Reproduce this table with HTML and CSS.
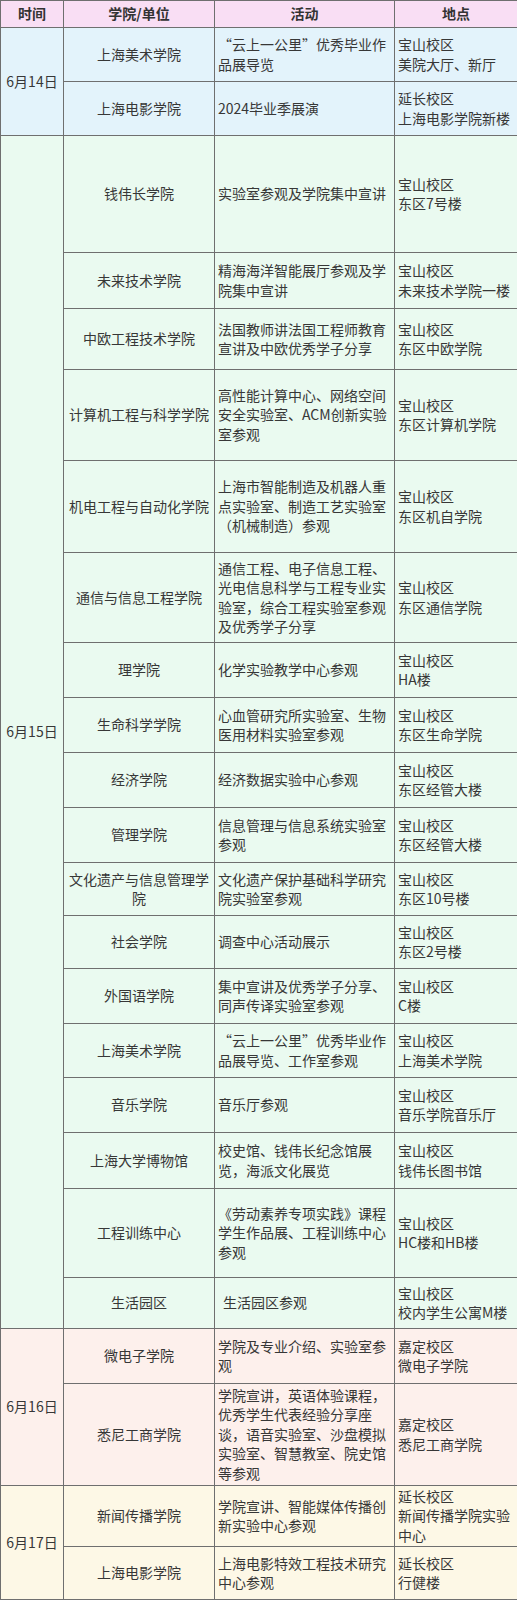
FILE: index.html
```html
<!DOCTYPE html>
<html lang="zh-CN">
<head>
<meta charset="utf-8">
<title>开放日活动安排</title>
<link rel="stylesheet" href="styles.css">
</head>
<body>
<table class="schedule">
  <colgroup>
    <col class="col-date">
    <col class="col-unit">
    <col class="col-act">
    <col class="col-loc">
  </colgroup>
  <thead>
    <tr class="head h27">
      <th>时间</th><th>学院/单位</th><th>活动</th><th>地点</th>
    </tr>
  </thead>
  <tbody class="day d14">
    <tr class="h54">
      <td class="c-date" rowspan="2">6月14日</td>
      <td class="c-unit">上海美术学院</td>
      <td class="c-act">“云上一公里”优秀毕业作品展导览</td>
      <td class="c-loc">宝山校区<br>美院大厅、新厅</td>
    </tr>
    <tr class="h54">
      <td class="c-unit">上海电影学院</td>
      <td class="c-act">2024毕业季展演</td>
      <td class="c-loc">延长校区<br>上海电影学院新楼</td>
    </tr>
  </tbody>
  <tbody class="day d15">
    <tr class="h117">
      <td class="c-date" rowspan="18">6月15日</td>
      <td class="c-unit">钱伟长学院</td>
      <td class="c-act">实验室参观及学院集中宣讲</td>
      <td class="c-loc">宝山校区<br>东区7号楼</td>
    </tr>
    <tr class="h56">
      <td class="c-unit">未来技术学院</td>
      <td class="c-act">精海海洋智能展厅参观及学院集中宣讲</td>
      <td class="c-loc">宝山校区<br>未来技术学院一楼</td>
    </tr>
    <tr class="h61">
      <td class="c-unit">中欧工程技术学院</td>
      <td class="c-act">法国教师讲法国工程师教育宣讲及中欧优秀学子分享</td>
      <td class="c-loc">宝山校区<br>东区中欧学院</td>
    </tr>
    <tr class="h91">
      <td class="c-unit">计算机工程与科学学院</td>
      <td class="c-act">高性能计算中心、网络空间安全实验室、ACM创新实验室参观</td>
      <td class="c-loc">宝山校区<br>东区计算机学院</td>
    </tr>
    <tr class="h92">
      <td class="c-unit">机电工程与自动化学院</td>
      <td class="c-act">上海市智能制造及机器人重点实验室、制造工艺实验室（机械制造）参观</td>
      <td class="c-loc">宝山校区<br>东区机自学院</td>
    </tr>
    <tr class="h90">
      <td class="c-unit">通信与信息工程学院</td>
      <td class="c-act">通信工程、电子信息工程、光电信息科学与工程专业实验室，综合工程实验室参观及优秀学子分享</td>
      <td class="c-loc">宝山校区<br>东区通信学院</td>
    </tr>
    <tr class="h55">
      <td class="c-unit">理学院</td>
      <td class="c-act">化学实验教学中心参观</td>
      <td class="c-loc">宝山校区<br>HA楼</td>
    </tr>
    <tr class="h55">
      <td class="c-unit">生命科学学院</td>
      <td class="c-act">心血管研究所实验室、生物医用材料实验室参观</td>
      <td class="c-loc">宝山校区<br>东区生命学院</td>
    </tr>
    <tr class="h55">
      <td class="c-unit">经济学院</td>
      <td class="c-act">经济数据实验中心参观</td>
      <td class="c-loc">宝山校区<br>东区经管大楼</td>
    </tr>
    <tr class="h55">
      <td class="c-unit">管理学院</td>
      <td class="c-act">信息管理与信息系统实验室参观</td>
      <td class="c-loc">宝山校区<br>东区经管大楼</td>
    </tr>
    <tr class="h53">
      <td class="c-unit">文化遗产与信息管理学院</td>
      <td class="c-act">文化遗产保护基础科学研究院实验室参观</td>
      <td class="c-loc">宝山校区<br>东区10号楼</td>
    </tr>
    <tr class="h53">
      <td class="c-unit">社会学院</td>
      <td class="c-act">调查中心活动展示</td>
      <td class="c-loc">宝山校区<br>东区2号楼</td>
    </tr>
    <tr class="h55">
      <td class="c-unit">外国语学院</td>
      <td class="c-act">集中宣讲及优秀学子分享、同声传译实验室参观</td>
      <td class="c-loc">宝山校区<br>C楼</td>
    </tr>
    <tr class="h54">
      <td class="c-unit">上海美术学院</td>
      <td class="c-act">“云上一公里”优秀毕业作品展导览、工作室参观</td>
      <td class="c-loc">宝山校区<br>上海美术学院</td>
    </tr>
    <tr class="h55">
      <td class="c-unit">音乐学院</td>
      <td class="c-act">音乐厅参观</td>
      <td class="c-loc">宝山校区<br>音乐学院音乐厅</td>
    </tr>
    <tr class="h56">
      <td class="c-unit">上海大学博物馆</td>
      <td class="c-act">校史馆、钱伟长纪念馆展览，海派文化展览</td>
      <td class="c-loc">宝山校区<br>钱伟长图书馆</td>
    </tr>
    <tr class="h89">
      <td class="c-unit">工程训练中心</td>
      <td class="c-act">《劳动素养专项实践》课程学生作品展、工程训练中心参观</td>
      <td class="c-loc">宝山校区<br>HC楼和HB楼</td>
    </tr>
    <tr class="h51">
      <td class="c-unit">生活园区</td>
      <td class="c-act indent">生活园区参观</td>
      <td class="c-loc">宝山校区<br>校内学生公寓M楼</td>
    </tr>
  </tbody>
  <tbody class="day d16">
    <tr class="h55">
      <td class="c-date" rowspan="2">6月16日</td>
      <td class="c-unit">微电子学院</td>
      <td class="c-act">学院及专业介绍、实验室参观</td>
      <td class="c-loc">嘉定校区<br>微电子学院</td>
    </tr>
    <tr class="h102">
      <td class="c-unit">悉尼工商学院</td>
      <td class="c-act">学院宣讲，英语体验课程，优秀学生代表经验分享座谈，语音实验室、沙盘模拟实验室、智慧教室、院史馆等参观</td>
      <td class="c-loc">嘉定校区<br>悉尼工商学院</td>
    </tr>
  </tbody>
  <tbody class="day d17">
    <tr class="h61">
      <td class="c-date" rowspan="2">6月17日</td>
      <td class="c-unit">新闻传播学院</td>
      <td class="c-act">学院宣讲、智能媒体传播创新实验中心参观</td>
      <td class="c-loc">延长校区<br>新闻传播学院实验中心</td>
    </tr>
    <tr class="h53">
      <td class="c-unit">上海电影学院</td>
      <td class="c-act">上海电影特效工程技术研究中心参观</td>
      <td class="c-loc">延长校区<br>行健楼</td>
    </tr>
  </tbody>
</table>
</body>
</html>
```

FILE: styles.css
```css
html, body {
  margin: 0;
  padding: 0;
  background: #ffffff;
}

.schedule {
  width: 517px;
  border-collapse: collapse;
  table-layout: fixed;
  font-family: "Noto Sans CJK SC", "Noto Sans", sans-serif;
  font-size: 14px;
  line-height: 19.5px;
  color: #373737;
}

.col-date { width: 63px; }
.col-unit { width: 151px; }
.col-act  { width: 180px; }
.col-loc  { width: 123px; }

.schedule th,
.schedule td {
  border: 1px solid #6f6f6f;
  padding: 0 3px;
  vertical-align: middle;
}

.schedule th {
  font-weight: bold;
  text-align: center;
  color: #333333;
}

.head { background: #f9def4; }
.d14 { background: #e3f3fb; }
.d15 { background: #eafaf0; }
.d16 { background: #fdf0ec; }
.d17 { background: #fdf8e6; }

.c-date { text-align: center; }
.c-unit { text-align: center; }
.c-act  { text-align: left; }
.c-loc  { text-align: left; }

.indent { text-indent: 5px; }

.h27  { height: 27px; }
.h51  { height: 51px; }
.h53  { height: 53px; }
.h54  { height: 54px; }
.h55  { height: 55px; }
.h56  { height: 56px; }
.h61  { height: 61px; }
.h89  { height: 89px; }
.h90  { height: 90px; }
.h91  { height: 91px; }
.h92  { height: 92px; }
.h102 { height: 102px; }
.h117 { height: 117px; }
```
